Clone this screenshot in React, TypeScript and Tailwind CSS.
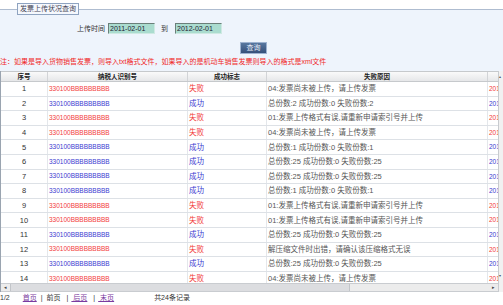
const rows = [
  { ok: false, reason: "04:发票尚未被上传，请上传发票" },
  { ok: true, reason: "总份数:2 成功份数:0 失败份数:2" },
  { ok: false, reason: "01:发票上传格式有误,请重新申请索引号并上传" },
  { ok: false, reason: "04:发票尚未被上传，请上传发票" },
  { ok: true, reason: "总份数:1 成功份数:0 失败份数:1" },
  { ok: true, reason: "总份数:25 成功份数:0 失败份数:25" },
  { ok: true, reason: "总份数:25 成功份数:0 失败份数:25" },
  { ok: true, reason: "总份数:1 成功份数:0 失败份数:1" },
  { ok: false, reason: "01:发票上传格式有误,请重新申请索引号并上传" },
  { ok: false, reason: "01:发票上传格式有误,请重新申请索引号并上传" },
  { ok: true, reason: "总份数:25 成功份数:0 失败份数:25" },
  { ok: false, reason: "解压缩文件时出错，请确认该压缩格式无误" },
  { ok: true, reason: "总份数:25 成功份数:0 失败份数:25" },
  { ok: false, reason: "04:发票尚未被上传，请上传发票" },
]

const font = "font-['Liberation_Sans','Noto_Sans_CJK_SC',sans-serif]"

export default function App() {
  return (
    <div className={`w-[503px] h-[305px] overflow-hidden bg-white text-[#333] ${font}`}>
      {/* query panel */}
      <div className="pt-[9px]">
        <div className="relative h-[62px] border-t border-[#aebcd0] bg-[#eef4fc]">
          <div className="absolute left-[17px] -top-[7px] h-[12px] w-[62px] border border-[#8ea3c0] bg-[#f5f8fd] text-center text-[7px] leading-[10px] text-[#445]">
            发票上传状况查询
          </div>

          <div className="flex items-center pl-[77px] pt-[13px] text-[7px] leading-[10px]">
            <span className="mr-[3px]">上传时间</span>
            <div className="h-[11px] w-[47px] border border-t-[#6b7f7a] border-l-[#6b7f7a] border-r-[#cfe9e3] border-b-[#cfe9e3] bg-[#aadccf] pl-[1px] text-[7px] leading-[9px] text-[#223]">
              2011-02-01
            </div>
            <span className="ml-[6px] mr-[7px]">到</span>
            <div className="h-[11px] w-[47px] border border-t-[#6b7f7a] border-l-[#6b7f7a] border-r-[#cfe9e3] border-b-[#cfe9e3] bg-[#aadccf] pl-[1px] text-[7px] leading-[9px] text-[#223]">
              2012-02-01
            </div>
          </div>

          <div className="pl-[240px] pt-[8px]">
            <div className="flex h-[12px] w-[27px] items-center justify-center border border-[#9db2d0] bg-gradient-to-b from-[#58779f] to-[#36507a] text-[7px] text-[#e8eefa]">
              查询
            </div>
          </div>

          <div className="mt-[4px] whitespace-nowrap text-[7px] leading-[8px] text-[#f02828]">
            注：如果是导入货物销售发票，则导入txt格式文件，如果导入的是机动车销售发票则导入的格式是xml文件
          </div>
        </div>
      </div>

      {/* grid */}
      <div className="flex h-[221px]">
        <div className="flex w-[498px] flex-col border-l border-[#9aa4b0]">
          <div className="flex h-[11px] border-y border-[#c6c9cc] bg-gradient-to-b from-[#fafafa] to-[#e6e7e9] text-[6.5px] font-bold leading-[9px] text-[#222]">
            <div className="w-[47px] border-r border-[#d2d4d7] text-center">序号</div>
            <div className="w-[140px] border-r border-[#d2d4d7] text-center">纳税人识别号</div>
            <div className="w-[79px] border-r border-[#d2d4d7] text-center">成功标志</div>
            <div className="w-[221px] border-r border-[#d2d4d7] text-center">失败原因</div>
            <div className="flex-1" />
          </div>

          <div className="flex-1 overflow-hidden">
            {rows.map((r, i) => {
              const color = r.ok ? "text-[#3b3bd0]" : "text-[#f23c3c]"
              return (
                <div key={i} className="flex h-[14.6px] items-center border-b border-[#dde1e6] text-[7.5px]">
                  <div className="flex h-full w-[47px] items-center justify-center border-r border-[#e4e7eb]">{i + 1}</div>
                  <div className={`flex h-full w-[140px] items-center border-r border-[#e4e7eb] pl-[1px] text-[6.5px] ${color}`}>
                    330100BBBBBBBBB
                  </div>
                  <div className={`flex h-full w-[79px] items-center border-r border-[#e4e7eb] pl-[1px] ${color}`}>
                    {r.ok ? "成功" : "失败"}
                  </div>
                  <div className="flex h-full w-[221px] items-center whitespace-nowrap border-r border-[#e4e7eb] pl-[1px] text-[#555]">
                    {r.reason}
                  </div>
                  <div className={`h-full w-[10px] overflow-hidden pl-[1px] text-[6.5px] leading-[14px] ${color}`}>
                    201
                  </div>
                </div>
              )
            })}
          </div>

          {/* horizontal scrollbar */}
          <div className="flex h-[9px] border-y border-[#c9ccd0] bg-[#ececec]">
            <div className="flex w-[9px] items-center justify-center text-[5px] text-[#444]">◂</div>
            <div className="w-[340px] border-x border-[#c2c5c9] bg-[#dcdde0]" />
            <div className="flex-1" />
            <div className="flex w-[9px] items-center justify-center text-[5px] text-[#444]">▸</div>
          </div>
        </div>

        {/* vertical scrollbar */}
        <div className="flex w-[5px] flex-col justify-between border-l border-[#c8cbcf] bg-[#f1f1f1] pt-[3px] pb-[14px] text-[4px] leading-[5px] text-[#555]">
          <span>▴</span>
          <span>▾</span>
        </div>
      </div>

      {/* pager */}
      <div className="flex h-[13px] items-center whitespace-nowrap text-[7px]">
        <span>1/2</span>
        <span className="ml-[13px] text-[#7a3aa0] underline">首页</span>
        <span className="ml-[4px]">|</span>
        <span className="ml-[4px]">前页</span>
        <span className="ml-[6px]">|</span>
        <span className="ml-[3px] text-[#7a3aa0] underline">&nbsp;后页</span>
        <span className="ml-[6px]">|</span>
        <span className="ml-[3px] text-[#7a3aa0] underline">&nbsp;末页</span>
        <span className="ml-[40px]">共24条记录</span>
      </div>
    </div>
  )
}
